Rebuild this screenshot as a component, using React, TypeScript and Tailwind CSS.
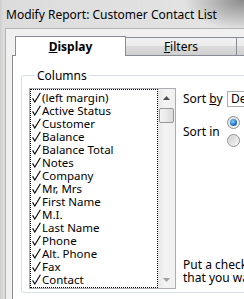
const columns = [
  '(left margin)',
  'Active Status',
  'Customer',
  'Balance',
  'Balance Total',
  'Notes',
  'Company',
  'Mr, Mrs',
  'First Name',
  'M.I.',
  'Last Name',
  'Phone',
  'Alt. Phone',
  'Fax',
  'Contact',
];

function Check() {
  return (
    <svg width="9" height="11" viewBox="0 0 9 11" className="shrink-0">
      <path d="M0.6 6.4 L2.8 10 L8.4 0.8" fill="none" stroke="#000" strokeWidth="1.1" />
    </svg>
  );
}

function Radio({ checked }: { checked?: boolean }) {
  return (
    <div className="flex h-[13px] w-[13px] items-center justify-center rounded-full border border-[#8e8f8f] bg-[linear-gradient(135deg,#d9d9d9,#fdfdfd)]">
      {checked ? (
        <div className="h-[7px] w-[7px] rounded-full bg-[radial-gradient(circle_at_40%_35%,#8fd1ff,#1b70c4_60%,#0e3d7a)]" />
      ) : (
        <div className="h-[9px] w-[9px] rounded-full bg-[linear-gradient(135deg,#cfcfcf,#f6f6f6)]" />
      )}
    </div>
  );
}

export default function App() {
  return (
    <div
      className="flex h-[299px] w-[244px] flex-col overflow-hidden bg-[linear-gradient(to_right,#cdcdcd,#dcdcdc_3px,#e4e4e4)] text-[12px] text-black"
      style={{ fontFamily: '"Noto Sans", "Open Sans", sans-serif' }}
    >
      <div className="flex h-[28px] shrink-0 items-center bg-[radial-gradient(ellipse_60px_30px_at_100%_0%,#8a8a8a,transparent)] pl-[6px] pt-[1px]">
        <span className="leading-[15px] whitespace-nowrap">Modify Report: Customer Contact List</span>
      </div>

      <div className="ml-[5px] flex flex-1 flex-col border-l border-t border-[#b4b4b4] bg-[#f0f0f0] pl-[6px] pt-[7px]">
        <div className="ml-[3px] flex h-[19px] items-end">
          <div className="relative z-10 -mb-px flex h-[20px] w-[111px] shrink-0 items-center justify-center border border-b-0 border-[#898c95] bg-white font-bold">
            <span>
              <u>D</u>isplay
            </span>
          </div>
          <div className="flex h-[18px] w-[111px] shrink-0 items-center justify-center border-r border-t border-[#898c95] bg-[linear-gradient(to_bottom,#f2f2f2,#ebebeb_50%,#dcdcdc_50%,#cfcfcf)]">
            <span>
              <u>F</u>ilters
            </span>
          </div>
          <div className="h-[18px] w-[40px] shrink-0 border-t border-[#898c95] bg-[linear-gradient(to_bottom,#f2f2f2,#ebebeb_50%,#dcdcdc_50%,#cfcfcf)]" />
        </div>

        <div className="flex-1 border-l border-t border-[#898c95] bg-white pl-[8px] pt-[12px]">
          <fieldset className="w-[300px] rounded-[3px] border border-[#d5dfe5] pb-[3px] pl-[7px]">
            <legend className="ml-[6px] px-[2px] leading-[15px]">Columns</legend>
            <div className="flex pt-[5px]">
              <div className="flex h-[201px] w-[147px] shrink-0 border border-[#abadb3]">
                <div className="flex flex-1 flex-col border border-dotted border-black pt-[1px] text-[11.5px]">
                  {columns.map((c) => (
                    <div key={c} className="flex h-[13px] items-center gap-[1px] pl-[1px] leading-[13px] whitespace-nowrap">
                      <Check />
                      <span>{c}</span>
                    </div>
                  ))}
                </div>
                <div className="flex w-[17px] shrink-0 flex-col bg-[linear-gradient(to_right,#e6e6e6,#f3f3f3_40%,#f0f0f0)]">
                  <div className="flex h-[17px] items-center justify-center">
                    <svg width="7" height="4" viewBox="0 0 7 4">
                      <path d="M0 4 L3.5 0 L7 4 Z" fill="#4d4d4d" />
                    </svg>
                  </div>
                  <div className="mx-[1px] mt-[2px] h-[15px] rounded-[2px] border border-[#979797] bg-[linear-gradient(to_right,#f4f4f4,#e8e8e8_50%,#dadada)]" />
                  <div className="mt-auto flex h-[17px] items-center justify-center">
                    <svg width="7" height="4" viewBox="0 0 7 4">
                      <path d="M0 0 L3.5 4 L7 0 Z" fill="#a0a0a0" />
                    </svg>
                  </div>
                </div>
              </div>

              <div className="ml-[7px] flex flex-col">
                <div className="mt-[3px] flex h-[16px] items-center">
                  <span className="w-[44px] whitespace-nowrap">
                    Sort <u>b</u>y
                  </span>
                  <div className="flex h-[16px] w-[80px] items-center border border-[#abadb3] bg-white pl-[3px]">
                    Default
                  </div>
                </div>
                <div className="mt-[9px] flex items-center">
                  <span className="w-[44px] whitespace-nowrap">Sort in</span>
                  <div className="flex flex-col gap-[5px]">
                    <Radio checked />
                    <Radio />
                  </div>
                </div>
                <div className="mt-auto mb-[5px] leading-[13px] whitespace-nowrap">
                  <div>Put a check mark next to each</div>
                  <div>that you want to display</div>
                </div>
              </div>
            </div>
          </fieldset>
        </div>
      </div>
    </div>
  );
}
